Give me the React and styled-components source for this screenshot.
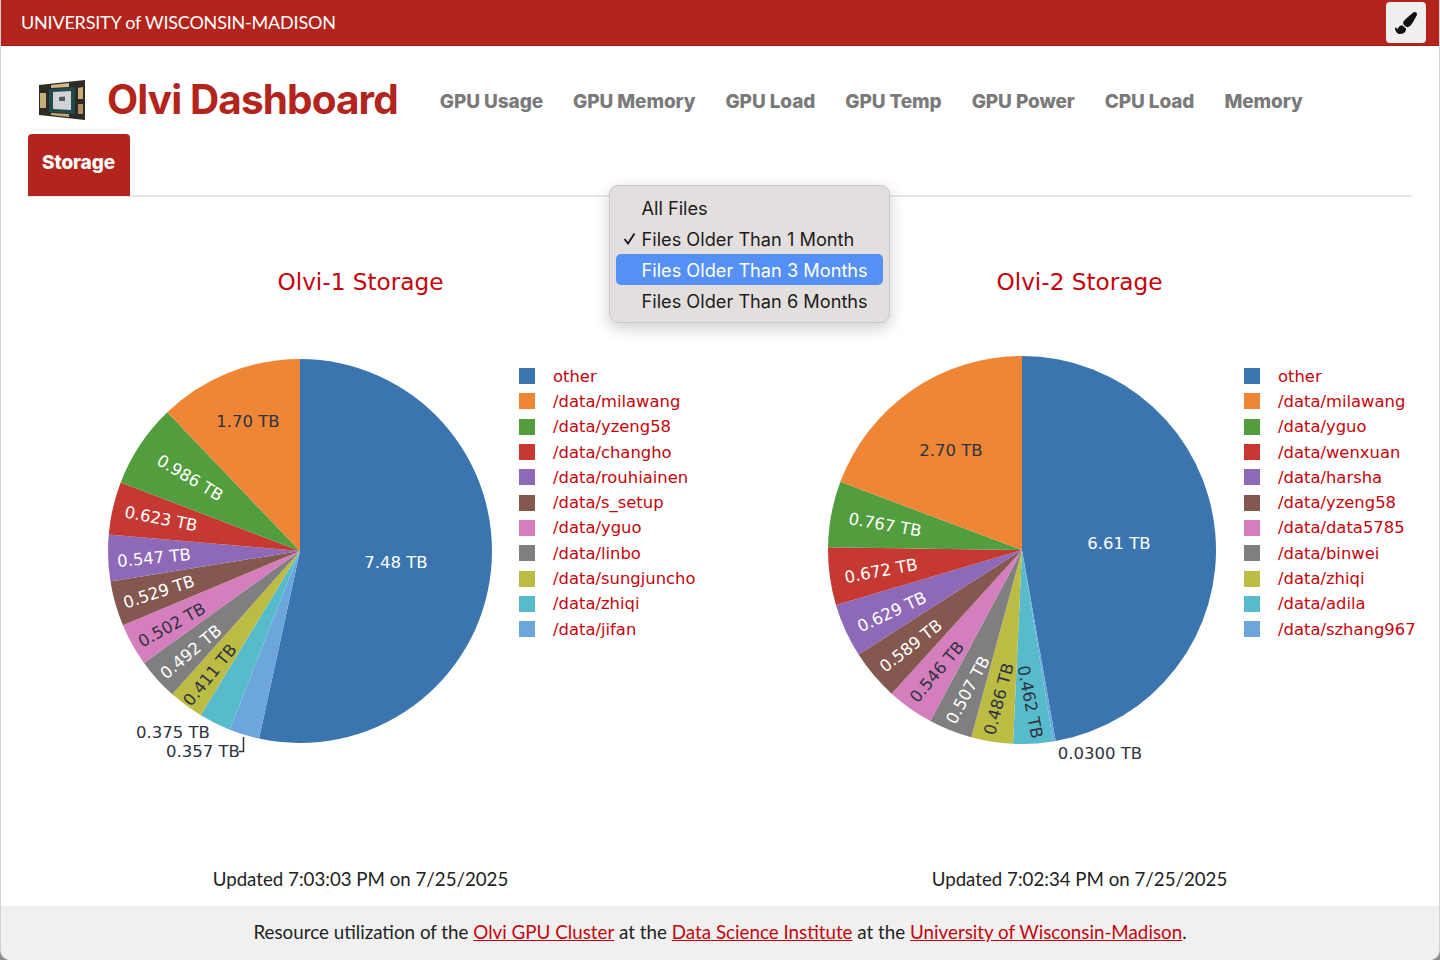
import React from 'react';
import styled, { createGlobalStyle } from 'styled-components';
import { FaPaintBrush } from 'react-icons/fa';

const SLICE_COLORS = ['#3a75af', '#ef8636', '#529d3e', '#c53932', '#8d69b8', '#84584e', '#d57ebe', '#7f7f7f', '#bcbc45', '#58bbcc', '#6ca6dc'];
const DARK = '#2d3340';
const LIGHT = '#ffffff';

const TABS = ['GPU Usage', 'GPU Memory', 'GPU Load', 'GPU Temp', 'GPU Power', 'CPU Load', 'Memory'];

const MENU = [
  { label: 'All Files' },
  { label: 'Files Older Than 1 Month', checked: true },
  { label: 'Files Older Than 3 Months', active: true },
  { label: 'Files Older Than 6 Months' },
];

const CHARTS = [
  {
    title: 'Olvi-1 Storage',
    updated: 'Updated 7:03:03 PM on 7/25/2025',
    pieWidth: 518,
    cx: 299,
    cy: 221,
    r: 192,
    values: [7.48, 1.7, 0.986, 0.623, 0.547, 0.529, 0.502, 0.492, 0.411, 0.375, 0.357],
    labels: [
      { text: '7.48 TB', x: 395, y: 232, fill: LIGHT },
      { text: '1.70 TB', x: 247, y: 91, fill: DARK },
      { text: '0.986 TB', x: 189, y: 148, rot: 31, fill: LIGHT },
      { text: '0.623 TB', x: 160, y: 189, rot: 11, fill: LIGHT },
      { text: '0.547 TB', x: 153, y: 228, rot: -5.5, fill: LIGHT },
      { text: '0.529 TB', x: 158, y: 262, rot: -18, fill: LIGHT },
      { text: '0.502 TB', x: 171, y: 295, rot: -29, fill: DARK },
      { text: '0.492 TB', x: 190, y: 322, rot: -40, fill: LIGHT },
      { text: '0.411 TB', x: 209, y: 345, rot: -51, fill: DARK },
      { text: '0.375 TB', x: 172, y: 402, fill: DARK },
      { text: '0.357 TB', x: 202, y: 421, fill: DARK },
    ],
    leader: 'M242.5 407V421.5H238',
    legend: ['other', '/data/milawang', '/data/yzeng58', '/data/changho', '/data/rouhiainen', '/data/s_setup', '/data/yguo', '/data/linbo', '/data/sungjuncho', '/data/zhiqi', '/data/jifan'],
  },
  {
    title: 'Olvi-2 Storage',
    updated: 'Updated 7:02:34 PM on 7/25/2025',
    pieWidth: 524,
    cx: 302,
    cy: 220,
    r: 194,
    values: [6.61, 2.7, 0.767, 0.672, 0.629, 0.589, 0.546, 0.507, 0.486, 0.462, 0.03],
    labels: [
      { text: '6.61 TB', x: 399, y: 213, fill: LIGHT },
      { text: '2.70 TB', x: 231, y: 120, fill: DARK },
      { text: '0.767 TB', x: 165, y: 195, rot: 10, fill: LIGHT },
      { text: '0.672 TB', x: 161, y: 241, rot: -10.5, fill: LIGHT },
      { text: '0.629 TB', x: 172, y: 282, rot: -25, fill: LIGHT },
      { text: '0.589 TB', x: 191, y: 316, rot: -38, fill: LIGHT },
      { text: '0.546 TB', x: 217, y: 342, rot: -50, fill: DARK },
      { text: '0.507 TB', x: 248, y: 360, rot: -62, fill: LIGHT },
      { text: '0.486 TB', x: 279, y: 369, rot: -75, fill: DARK },
      { text: '0.462 TB', x: 310, y: 372, rot: 79, fill: DARK },
      { text: '0.0300 TB', x: 380, y: 423, fill: DARK },
    ],
    legend: ['other', '/data/milawang', '/data/yguo', '/data/wenxuan', '/data/harsha', '/data/yzeng58', '/data/data5785', '/data/binwei', '/data/zhiqi', '/data/adila', '/data/szhang967'],
  },
];

const GlobalStyle = createGlobalStyle`
  html, body {
    margin: 0;
    padding: 0;
    background: #8e8e8e;
  }
`;

const Page = styled.div`
  box-sizing: border-box;
  position: relative;
  width: 1440px;
  height: 960px;
  display: flex;
  flex-direction: column;
  overflow: hidden;
  background: #fff;
  border-left: 1px solid #d2d2d2;
  border-right: 1px solid #d2d2d2;
  border-radius: 0 0 10px 10px;
  font-family: 'Lato', 'Liberation Sans', sans-serif;
`;

const TopBar = styled.header`
  flex: none;
  box-sizing: border-box;
  height: 46px;
  margin: 0 -1px;
  padding: 0 14px 0 21px;
  display: flex;
  align-items: center;
  justify-content: space-between;
  background: #b3241c;
  border-bottom: 1px solid #a01d16;
`;

const University = styled.div`
  margin-bottom: 2px;
  color: #fff;
  font-size: 18px;
  letter-spacing: -0.2px;
`;

const ThemeButton = styled.button`
  width: 40px;
  height: 41px;
  padding: 0;
  display: flex;
  align-items: center;
  justify-content: center;
  background: #efefef;
  border: 0;
  border-radius: 4px;
  color: #111;
  font-size: 22px;
`;

const Nav = styled.nav`
  flex: none;
  margin: 0 27px;
  display: flex;
  flex-wrap: wrap;
  border-bottom: 2px solid #e6e6e6;
`;

const Brand = styled.div`
  box-sizing: border-box;
  height: 88px;
  padding: 20px 27px 0 10px;
  display: flex;
  align-items: center;
  gap: 21px;
`;

const BrandName = styled.h1`
  margin: -2px 0 0;
  color: #b3241c;
  font-family: 'Inter', 'Liberation Sans', sans-serif;
  font-size: 40.5px;
  font-weight: 700;
  letter-spacing: -0.9px;
  white-space: nowrap;
`;

const Tab = styled.a`
  box-sizing: border-box;
  height: ${p => (p.$active ? '62px' : '88px')};
  margin-bottom: ${p => (p.$active ? '-1px' : '0')};
  padding: ${p => (p.$active ? '16px 15px 0 14px' : '43px 15px 0')};
  color: ${p => (p.$active ? '#fff' : '#7a7a7a')};
  background: ${p => (p.$active ? '#b3241c' : 'transparent')};
  border-radius: 4px 4px 0 0;
  font-family: 'Inter', 'Liberation Sans', sans-serif;
  font-size: 19px;
  font-weight: 800;
  line-height: 26px;
  letter-spacing: -0.1px;
  white-space: nowrap;
`;

const Menu = styled.div`
  position: absolute;
  top: 185px;
  left: 608px;
  box-sizing: border-box;
  width: 281px;
  height: 138px;
  padding: 6px;
  background: #e4dfdf;
  border: 1px solid #cdc8c8;
  border-radius: 9px;
  box-shadow: 0 5px 16px rgba(0, 0, 0, 0.2);
`;

const MenuItem = styled.div`
  position: relative;
  height: 31px;
  padding-left: 25.5px;
  color: ${p => (p.$active ? '#fff' : '#1c1c1c')};
  background: ${p => (p.$active ? '#5590f4' : 'transparent')};
  border-radius: 5px;
  font-family: 'Inter', 'Liberation Sans', sans-serif;
  font-size: 18.2px;
  line-height: 32px;
  white-space: nowrap;
`;

const Check = styled.svg`
  position: absolute;
  left: 7px;
  top: 9px;
`;

const Charts = styled.main`
  flex: 1;
  display: grid;
  grid-template-columns: 1fr 1fr;
  padding-top: 69px;
`;

const ChartColumn = styled.section`
  display: flex;
  flex-direction: column;
  align-items: stretch;
`;

const ChartTitle = styled.h2`
  margin: 0;
  height: 32px;
  color: #c5050c;
  font-family: 'DejaVu Sans', sans-serif;
  font-size: 23.2px;
  font-weight: 400;
  line-height: 32px;
  text-align: center;
`;

const Plot = styled.div`
  height: 536px;
  margin-top: 32px;
  display: grid;
  grid-template-columns: ${p => p.$pieWidth}px 1fr;
`;

const PieSvg = styled.svg`
  display: block;
`;

const SliceText = styled.text`
  font-family: 'DejaVu Sans', sans-serif;
  font-size: 16.5px;
  text-anchor: middle;
  dominant-baseline: central;
`;

const Legend = styled.ul`
  margin: 0;
  padding: 33.5px 0 0;
  list-style: none;
`;

const LegendRow = styled.li`
  height: 25.3px;
  display: flex;
  align-items: center;
  gap: 18px;
  color: #c5050c;
  font-family: 'DejaVu Sans', sans-serif;
  font-size: 16.4px;
  white-space: nowrap;
`;

const Swatch = styled.span`
  flex: none;
  width: 16px;
  height: 16px;
  background: ${p => p.$color};
`;

const Updated = styled.div`
  color: #222;
  font-size: 18.7px;
  line-height: 26px;
  text-align: center;
`;

const Footer = styled.footer`
  flex: none;
  box-sizing: border-box;
  height: 54px;
  padding-bottom: 3px;
  display: flex;
  align-items: center;
  justify-content: center;
  background: #f0f0f0;
  color: #222;
  font-size: 18.8px;
  white-space: pre;
`;

const FooterLink = styled.a`
  color: #c5050c;
  text-decoration: underline;
`;

const ChipLogo = () => (
  <svg width="48" height="40" viewBox="0 0 48 40">
    <filter id="soft">
      <feGaussianBlur stdDeviation="0.5" />
    </filter>
    <g filter="url(#soft)">
      <polygon points="1,5 47,0 47,40 1,35" fill="#2f2a26" />
      <polygon points="2,13 8,13 8,28 2,28" fill="#c9ad78" />
      <polygon points="40,8 45,7 45,19 40,19" fill="#c9ad78" />
      <polygon points="40,24 45,24 45,34 40,34" fill="#a9915f" />
      <polygon points="13,5 31,3 31,7 13,8" fill="#d4b987" />
      <polygon points="13,33 31,34 31,37 13,35" fill="#c2a876" />
      <polygon points="11,9 37,7 37,34 11,32" fill="#22484b" />
      <polygon points="15,12 33,11 33,30 15,29" fill="#d0d2d3" />
      <polygon points="21,17 27,16.5 27,21 21,21" fill="#55585a" />
    </g>
  </svg>
);

const polar = (cx, cy, r, angle) => [cx + r * Math.sin(angle), cy - r * Math.cos(angle)];

// clockwise from the top: the first slice, then the others from last to first
const slicePaths = ({ cx, cy, r, values }) => {
  const total = values.reduce((sum, v) => sum + v, 0);
  const order = [0, ...values.map((_, i) => values.length - 1 - i).slice(0, -1)];
  let start = 0;
  return order.map(i => {
    const end = start + (values[i] / total) * Math.PI * 2;
    const [x0, y0] = polar(cx, cy, r, start);
    const [x1, y1] = polar(cx, cy, r, end);
    const large = end - start > Math.PI ? 1 : 0;
    start = end;
    return { i, d: `M${cx} ${cy}L${x0} ${y0}A${r} ${r} 0 ${large} 1 ${x1} ${y1}Z` };
  });
};

const Pie = ({ chart }) => (
  <PieSvg width={chart.pieWidth} height="536" viewBox={`0 0 ${chart.pieWidth} 536`}>
    {slicePaths(chart).map(({ i, d }) => (
      <path key={i} d={d} fill={SLICE_COLORS[i]} />
    ))}
    {chart.leader && <path d={chart.leader} fill="none" stroke="#333" strokeWidth="1.5" />}
    {chart.labels.map(label => (
      <SliceText
        key={label.text}
        x={label.x}
        y={label.y}
        fill={label.fill}
        transform={label.rot ? `rotate(${label.rot} ${label.x} ${label.y})` : undefined}
      >
        {label.text}
      </SliceText>
    ))}
  </PieSvg>
);

const App = () => (
  <Page>
    <GlobalStyle />
    <TopBar>
      <University>UNIVERSITY of WISCONSIN-MADISON</University>
      <ThemeButton aria-label="Theme">
        <FaPaintBrush />
      </ThemeButton>
    </TopBar>
    <Nav>
      <Brand>
        <ChipLogo />
        <BrandName>Olvi Dashboard</BrandName>
      </Brand>
      {TABS.map(tab => (
        <Tab key={tab}>{tab}</Tab>
      ))}
      <Tab $active>Storage</Tab>
    </Nav>
    <Charts>
      {CHARTS.map(chart => (
        <ChartColumn key={chart.title}>
          <ChartTitle>{chart.title}</ChartTitle>
          <Plot $pieWidth={chart.pieWidth}>
            <Pie chart={chart} />
            <Legend>
              {chart.legend.map((name, i) => (
                <LegendRow key={name}>
                  <Swatch $color={SLICE_COLORS[i]} />
                  {name}
                </LegendRow>
              ))}
            </Legend>
          </Plot>
          <Updated>{chart.updated}</Updated>
        </ChartColumn>
      ))}
    </Charts>
    <Footer>
      Resource utilization of the <FooterLink>Olvi GPU Cluster</FooterLink> at the{' '}
      <FooterLink>Data Science Institute</FooterLink> at the{' '}
      <FooterLink>University of Wisconsin-Madison</FooterLink>.
    </Footer>
    <Menu>
      {MENU.map(item => (
        <MenuItem key={item.label} $active={item.active}>
          {item.checked && (
            <Check width="13" height="13" viewBox="0 0 13 13">
              <path d="M1.5 7l3.5 4.5L11.5 1.5" fill="none" stroke="#1c1c1c" strokeWidth="1.9" />
            </Check>
          )}
          {item.label}
        </MenuItem>
      ))}
    </Menu>
  </Page>
);

export default App;
